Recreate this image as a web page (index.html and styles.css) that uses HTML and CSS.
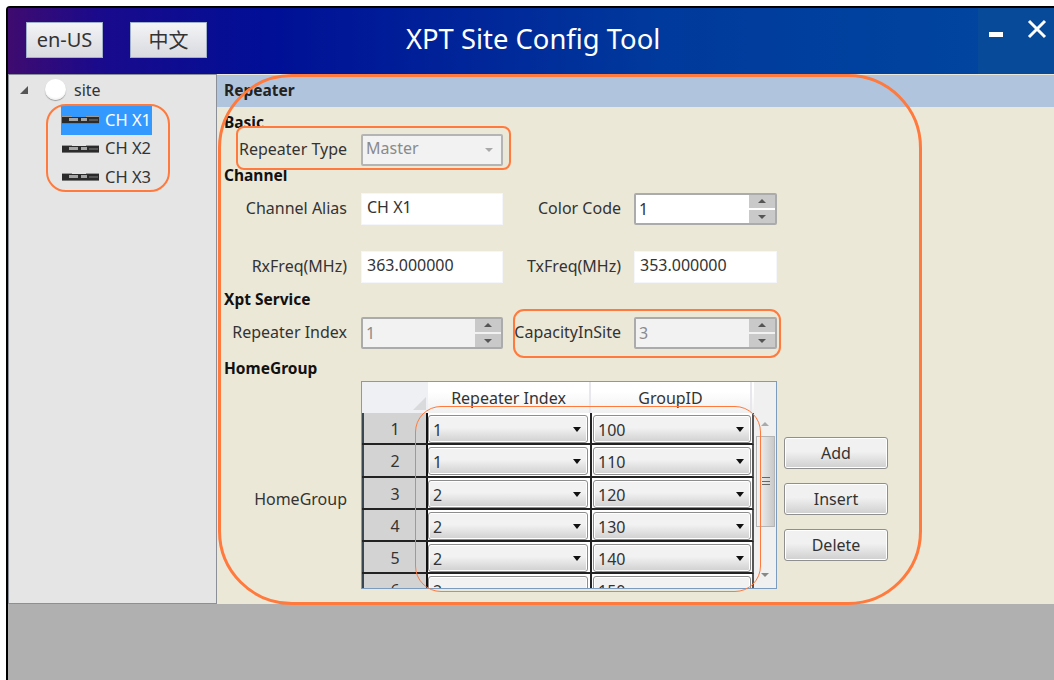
FILE: index.html
```html
<!DOCTYPE html>
<html lang="en">
<head>
<meta charset="utf-8">
<title>XPT Site Config Tool</title>
<link rel="stylesheet" href="styles.css">
</head>
<body>
<svg class="defs" width="0" height="0" aria-hidden="true">
  <symbol id="radio-unit" viewBox="0 0 37 8">
    <path d="M0 1h37v6H0z" fill="#2b2b2b"/>
    <path d="M0 0h10v1H0zM24 0h13v1H24z" fill="#9a9a9a"/>
    <path d="M7 2h9v3H7zM19 2h6v3h-6z" fill="#a5a5a5"/>
    <path d="M27 3h9v2h-9z" fill="#555"/>
    <path d="M0 7h37v1H0z" fill="#777"/>
  </symbol>
</svg>
<div class="window">
  <header class="titlebar">
    <div class="lang-group">
      <button class="lang-btn">en-US</button>
      <button class="lang-btn cjk">中文</button>
    </div>
    <h1 class="app-title">XPT Site Config Tool</h1>
    <div class="win-controls">
      <span class="win-min"></span>
      <svg class="win-close" width="20" height="20" viewBox="0 0 20 20"><path d="M2 2l16 16M18 2L2 18" stroke="#fff" stroke-width="3"/></svg>
    </div>
  </header>

  <div class="workspace">
    <aside class="tree">
      <div class="tree-root">
        <span class="tree-arrow"></span>
        <span class="tree-globe"></span>
        <span>site</span>
      </div>
      <ul class="tree-children">
        <li class="tree-item selected"><svg class="unit-icon"><use href="#radio-unit"/></svg><span>CH X1</span></li>
        <li class="tree-item"><svg class="unit-icon"><use href="#radio-unit"/></svg><span>CH X2</span></li>
        <li class="tree-item"><svg class="unit-icon"><use href="#radio-unit"/></svg><span>CH X3</span></li>
      </ul>
    </aside>

    <main class="panel">
      <div class="panel-head">Repeater</div>
      <form class="form">
        <h2 class="section first">Basic</h2>
        <div class="row">
          <label class="lbl">Repeater Type</label>
          <div class="field disabled select">Master<span class="caret grey"></span></div>
        </div>

        <h2 class="section">Channel</h2>
        <div class="row">
          <label class="lbl">Channel Alias</label>
          <div class="field">CH X1</div>
          <label class="lbl">Color Code</label>
          <div class="field spin wide"><span class="spin-val">1</span><span class="spin-btns"><i class="up"></i><i class="down"></i></span></div>
        </div>
        <div class="row row-gap">
          <label class="lbl">RxFreq(MHz)</label>
          <div class="field">363.000000</div>
          <label class="lbl">TxFreq(MHz)</label>
          <div class="field wide">353.000000</div>
        </div>

        <h2 class="section service">Xpt Service</h2>
        <div class="row">
          <label class="lbl">Repeater Index</label>
          <div class="field spin disabled"><span class="spin-val">1</span><span class="spin-btns"><i class="up"></i><i class="down"></i></span></div>
          <label class="lbl">CapacityInSite</label>
          <div class="field spin disabled wide"><span class="spin-val">3</span><span class="spin-btns"><i class="up"></i><i class="down"></i></span></div>
        </div>

        <h2 class="section tight">HomeGroup</h2>
        <div class="group-row">
          <label class="lbl">HomeGroup</label>
          <div class="grid-box">
            <div class="grid-main">
              <div class="grid-head">
                <div class="corner"></div>
                <div class="col col-a">Repeater Index</div>
                <div class="col col-b">GroupID</div>
              </div>
              <div class="grid-row"><div class="num">1</div><div class="combo col-a">1<span class="caret"></span></div><div class="combo col-b">100<span class="caret"></span></div></div>
              <div class="grid-row"><div class="num">2</div><div class="combo col-a">1<span class="caret"></span></div><div class="combo col-b">110<span class="caret"></span></div></div>
              <div class="grid-row"><div class="num">3</div><div class="combo col-a">2<span class="caret"></span></div><div class="combo col-b">120<span class="caret"></span></div></div>
              <div class="grid-row"><div class="num">4</div><div class="combo col-a">2<span class="caret"></span></div><div class="combo col-b">130<span class="caret"></span></div></div>
              <div class="grid-row"><div class="num">5</div><div class="combo col-a">2<span class="caret"></span></div><div class="combo col-b">140<span class="caret"></span></div></div>
              <div class="grid-row"><div class="num">6</div><div class="combo col-a">2<span class="caret"></span></div><div class="combo col-b">150<span class="caret"></span></div></div>
            </div>
            <div class="vscroll">
              <span class="sb-up"></span>
              <div class="sb-thumb"><span class="sb-grip"></span></div>
              <span class="sb-down"></span>
            </div>
          </div>
          <div class="actions">
            <button type="button" class="act">Add</button>
            <button type="button" class="act">Insert</button>
            <button type="button" class="act">Delete</button>
          </div>
        </div>
      </form>
    </main>
  </div>
</div>

<!-- hand-drawn callouts on top of the window -->
<div class="mark mark-panel"></div>
<div class="mark mark-tree"></div>
<div class="mark mark-type"></div>
<div class="mark mark-capacity"></div>
<div class="mark mark-grid"></div>
</body>
</html>
```
FILE: styles.css
```css
* { box-sizing: border-box; }
html, body { margin: 0; height: 100%; }
body {
  position: relative;
  width: 1054px;
  height: 680px;
  overflow: hidden;
  background: #fff;
  font-family: "Noto Sans", "Noto Sans CJK SC", sans-serif;
  font-size: 16px;
  color: #333;
}
.defs { position: absolute; }

.window {
  margin: 6px 0 0 6px;
  height: 674px;
  border-left: 2px solid #000;
  border-top: 2px solid #000;
  border-top-left-radius: 4px;
  background: #b0b0b0;
}

/* title bar */
.titlebar {
  position: relative;
  display: flex;
  align-items: center;
  height: 66px;
  background: linear-gradient(90deg, #3f0b6f 0, #1a0a8c 90px, #000f96 260px, #003a9c 650px, #0047a0 100%);
}
.lang-group { display: flex; gap: 27px; margin: -3px 0 0 18px; }
.lang-btn {
  width: 77px;
  height: 36px;
  padding: 0;
  border: 1px solid #9fb0c8;
  background: linear-gradient(#f4f4f6, #d8dae0);
  font: inherit;
  font-size: 20px;
  color: #333;
}
.lang-btn.cjk { font-family: "Noto Sans CJK SC", sans-serif; }
.app-title {
  position: absolute;
  left: 398px;
  top: 13px;
  margin: 0;
  font-size: 27.4px;
  font-weight: 400;
  line-height: 36px;
  color: #fff;
}
.win-controls {
  position: absolute;
  right: 0;
  top: 0;
  width: 76px;
  height: 66px;
  background: #084a9a;
}
.win-min { position: absolute; left: 11px; top: 24px; width: 14px; height: 5px; background: #fff; }
.win-close { position: absolute; left: 49px; top: 11px; }

/* tree and panel */
.workspace { display: flex; height: 530px; }
.tree {
  width: 209px;
  flex: none;
  padding-top: 3px;
  background: #e5e5e5;
  border: 1px solid #8b9098;
}
.tree-root { display: flex; align-items: center; height: 23px; }
.tree-arrow {
  width: 0; height: 0;
  margin-left: 11px;
  border-style: solid;
  border-width: 0 0 8px 8px;
  border-color: transparent transparent #555 transparent;
}
.tree-globe {
  width: 21px;
  height: 21px;
  margin: 0 8px 0 17px;
  border-radius: 50%;
  background: radial-gradient(circle at 50% 40%, #fff 60%, #d5d5d5 100%);
  box-shadow: 0 1px 1px #999;
}
.tree-children { margin: 5px 0 0; padding: 0 0 0 52px; list-style: none; }
.tree-item {
  display: flex;
  align-items: center;
  gap: 6px;
  width: 91px;
  height: 28.5px;
  padding-left: 1px;
  font-size: 16.5px;
  white-space: nowrap;
}
.tree-item span { padding-bottom: 2px; }
.tree-item.selected { background: #3399ff; color: #fff; }
.unit-icon { width: 37px; height: 8px; flex: none; }

.panel { flex: 1; background: #ece8d8; }
.panel-head {
  height: 32px;
  margin-top: 1px;
  padding-left: 7px;
  background: #b0c4de;
  font-size: 15.5px;
  font-weight: 700;
  line-height: 30px;
  color: #222;
}
.form { padding-left: 7px; }
.section {
  margin: 1px 0 8px;
  height: 18px;
  font-size: 15.5px;
  font-weight: 700;
  line-height: 17px;
  color: #111;
}
.section.first { margin: 7px 0 2px; }
.section.service { margin-top: 8px; }
.section.tight { margin: 11px 0 3px; }

.row { display: flex; align-items: center; height: 32px; }
.row-gap { margin-top: 26px; }
.lbl { width: 123px; padding-bottom: 2px; text-align: right; white-space: nowrap; }
.row .lbl ~ .lbl { width: 118px; margin-right: 13px; }
.row > .lbl:first-child { margin-right: 14px; }
.field {
  position: relative;
  display: flex;
  align-items: center;
  width: 142px;
  height: 32px;
  padding: 0 5px 4px;
  background: #fff;
  border: 1px solid #f4f6fb;
}
.field.wide { width: 143px; }
.field.disabled { background: #f2f2f2; color: #8a8a8a; border: 2px solid #b4b4b4; border-radius: 2px; }
.field.select { padding: 0 3px 5px; }
.field.spin { padding: 0; border: 2px solid #ababab; border-radius: 2px; }
.spin-val { flex: 1; padding: 0 0 0 3px; }
.spin-btns { display: flex; flex-direction: column; gap: 2px; width: 26px; height: 100%; }
.spin-btns i { position: relative; flex: 1; background: #c9c9c9; }
.spin-btns i::after {
  content: "";
  position: absolute;
  left: 9px;
  border-style: solid;
  border-color: transparent;
  border-width: 4px;
}
.spin-btns .up::after { top: 0; border-bottom-color: #555; }
.spin-btns .down::after { top: 5px; border-top-color: #555; }

.caret {
  position: absolute;
  right: 6px;
  top: 50%;
  margin-top: -2px;
  border-style: solid;
  border-color: #111 transparent transparent;
  border-width: 5px 4.5px 0;
}
.caret.grey { border-top-color: #a9a9a9; border-width: 4px 4px 0; right: 8px; }

/* home group editor */
.group-row { display: flex; align-items: center; height: 208px; }
.group-row > .lbl { margin-right: 14px; padding: 28px 0 0; }
.grid-box {
  display: flex;
  width: 416px;
  height: 208px;
  border: 1px solid #7b9cbf;
  overflow: hidden;
  background: #fff;
}
.grid-main { width: 392px; flex: none; }
.grid-head { display: flex; height: 31px; background: linear-gradient(#fff 30%, #f0f0f0); }
.corner {
  position: relative;
  width: 66px;
  background: #eef0f3;
}
.corner::after {
  content: "";
  position: absolute;
  right: 2px;
  bottom: 3px;
  border-style: solid;
  border-width: 0 0 13px 13px;
  border-color: transparent transparent #d8dadc;
}
.col {
  height: 31px;
  border-right: 2px solid #e8e8ec;
  text-align: center;
  line-height: 33px;
}
.col-a { width: 163px; }
.col-b { width: 161px; }
.grid-row {
  display: flex;
  height: 32.25px;
  border-right: 2px solid #555;
  border-bottom: 2px solid #222;
  /* divider between the two combo columns */
  background: linear-gradient(#222, #222) 228px 0 / 2px 100% no-repeat, #fff;
}
.num {
  width: 66px;
  background: #d3d3d3;
  border-left: 2px solid #3a4650;
  border-right: 2px solid #111;
  text-align: center;
  line-height: 33px;
}
.combo {
  position: relative;
  height: 28px;
  margin: 2px 2px 0 0;
  padding-left: 4px;
  border: 1px solid #8d8d8d;
  border-radius: 3px;
  box-shadow: inset 0 0 0 1px #fff;
  background: linear-gradient(#f2f2f2 45%, #d0d0d0);
  line-height: 28px;
}
.combo.col-a { width: 160px; margin-right: 5px; }
.combo.col-b { width: 158px; margin-right: 0; }
.vscroll {
  position: relative;
  flex: 1;
  background: #f0f0f0;
  height: 100%;
}
.sb-up, .sb-down {
  position: absolute;
  left: 7px;
  border-style: solid;
  border-color: transparent;
  border-width: 4px;
}
.sb-up { top: 36px; border-bottom-color: #aaa; }
.sb-down { top: 191px; border-top-color: #888; }
.sb-thumb {
  position: absolute;
  left: 2px;
  top: 54px;
  width: 19px;
  height: 91px;
  border: 1px solid #b5b5b5;
  background: linear-gradient(90deg, #f4f4f4, #c9c9c9);
}
.sb-grip {
  position: absolute;
  left: 5px;
  top: 40px;
  width: 8px;
  height: 8px;
  border-top: 1px solid #666;
  border-bottom: 1px solid #666;
  background: linear-gradient(#666, #666) center / 100% 1px no-repeat;
}
.actions { display: flex; flex-direction: column; gap: 14px; align-self: flex-start; margin: 56px 0 0 7px; }
.act {
  width: 104px;
  height: 32px;
  padding: 0;
  border: 1px solid #8f8f8f;
  border-radius: 3px;
  box-shadow: inset 0 0 0 1px #fff;
  background: linear-gradient(#f1f1f1 45%, #cfcfcf);
  font: inherit;
  color: #333;
}

/* callouts */
.mark { position: absolute; border: 3px solid #ff7a3c; }
.mark-panel { left: 218px; top: 74px; width: 704px; height: 531px; border-radius: 74px; }
.mark-tree { left: 46px; top: 104px; width: 124px; height: 88px; border-radius: 20px; border-width: 2px; }
.mark-type { left: 236px; top: 126px; width: 275px; height: 44px; border-radius: 8px; border-width: 2px; }
.mark-capacity { left: 513px; top: 309px; width: 268px; height: 49px; border-radius: 11px; border-width: 2px; }
.mark-grid { left: 415px; top: 406px; width: 346px; height: 186px; border-radius: 26px; border-width: 1px; }
```
